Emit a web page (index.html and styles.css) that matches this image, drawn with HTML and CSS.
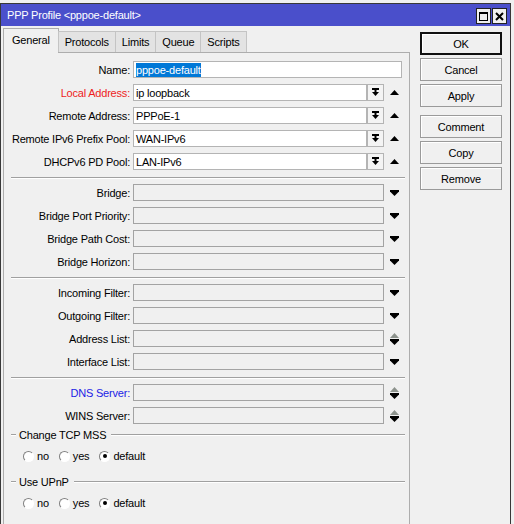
FILE: index.html
```html
<!DOCTYPE html>
<html lang="en">
<head>
    <meta charset="UTF-8">
    <title>PPP Profile</title>
    <link rel="stylesheet" href="styles.css">
</head>
<body>
    <div class="window">
        <div class="titlebar">
            <span class="title">PPP Profile &lt;pppoe-default&gt;</span>
            <div class="wnd-btns">
                <span class="wnd-btn">
                    <svg width="9" height="9" viewBox="0 0 9 9"><rect x="0.5" y="0.5" width="8" height="8" fill="none" stroke="#000"/><rect x="0" y="0" width="9" height="2" fill="#000"/></svg>
                </span>
                <span class="wnd-btn">
                    <svg width="9" height="9" viewBox="0 0 9 9"><path d="M1 1 L8 8 M8 1 L1 8" stroke="#000" stroke-width="2"/></svg>
                </span>
            </div>
        </div>
        <div class="content">
            <div class="main">
                <div class="tabs">
                    <div class="tab active">General</div>
                    <div class="tab">Protocols</div>
                    <div class="tab">Limits</div>
                    <div class="tab">Queue</div>
                    <div class="tab">Scripts</div>
                </div>
                <div class="panel">
                    <div class="section">
                        <div class="row">
                            <label>Name:</label>
                            <div class="field name"><span class="sel">pppoe-default</span></div>
                        </div>
                        <div class="row">
                            <label class="red">Local Address:</label>
                            <div class="field edit">ip loopback</div>
                            <span class="dd-btn"><svg width="9" height="9" viewBox="0 0 9 9"><rect x="1" y="0" width="7" height="2"/><rect x="3.5" y="2" width="2" height="2"/><polygon points="1,4 8,4 4.5,8"/></svg></span>
                            <span class="arrow"><svg width="9" height="5" viewBox="0 0 9 5"><polygon points="0,5 9,5 4.5,0"/></svg></span>
                        </div>
                        <div class="row">
                            <label>Remote Address:</label>
                            <div class="field edit">PPPoE-1</div>
                            <span class="dd-btn"><svg width="9" height="9" viewBox="0 0 9 9"><rect x="1" y="0" width="7" height="2"/><rect x="3.5" y="2" width="2" height="2"/><polygon points="1,4 8,4 4.5,8"/></svg></span>
                            <span class="arrow"><svg width="9" height="5" viewBox="0 0 9 5"><polygon points="0,5 9,5 4.5,0"/></svg></span>
                        </div>
                        <div class="row">
                            <label>Remote IPv6 Prefix Pool:</label>
                            <div class="field edit">WAN-IPv6</div>
                            <span class="dd-btn"><svg width="9" height="9" viewBox="0 0 9 9"><rect x="1" y="0" width="7" height="2"/><rect x="3.5" y="2" width="2" height="2"/><polygon points="1,4 8,4 4.5,8"/></svg></span>
                            <span class="arrow"><svg width="9" height="5" viewBox="0 0 9 5"><polygon points="0,5 9,5 4.5,0"/></svg></span>
                        </div>
                        <div class="row">
                            <label>DHCPv6 PD Pool:</label>
                            <div class="field edit">LAN-IPv6</div>
                            <span class="dd-btn"><svg width="9" height="9" viewBox="0 0 9 9"><rect x="1" y="0" width="7" height="2"/><rect x="3.5" y="2" width="2" height="2"/><polygon points="1,4 8,4 4.5,8"/></svg></span>
                            <span class="arrow"><svg width="9" height="5" viewBox="0 0 9 5"><polygon points="0,5 9,5 4.5,0"/></svg></span>
                        </div>
                    </div>
                    <div class="sep"></div>
                    <div class="section">
                        <div class="row">
                            <label>Bridge:</label>
                            <div class="field off"></div>
                            <span class="arrow"><svg width="9" height="6" viewBox="0 0 9 6"><polygon points="0,0 9,0 9,1.5 4.5,6 0,1.5"/></svg></span>
                        </div>
                        <div class="row">
                            <label>Bridge Port Priority:</label>
                            <div class="field off"></div>
                            <span class="arrow"><svg width="9" height="6" viewBox="0 0 9 6"><polygon points="0,0 9,0 9,1.5 4.5,6 0,1.5"/></svg></span>
                        </div>
                        <div class="row">
                            <label>Bridge Path Cost:</label>
                            <div class="field off"></div>
                            <span class="arrow"><svg width="9" height="6" viewBox="0 0 9 6"><polygon points="0,0 9,0 9,1.5 4.5,6 0,1.5"/></svg></span>
                        </div>
                        <div class="row">
                            <label>Bridge Horizon:</label>
                            <div class="field off"></div>
                            <span class="arrow"><svg width="9" height="6" viewBox="0 0 9 6"><polygon points="0,0 9,0 9,1.5 4.5,6 0,1.5"/></svg></span>
                        </div>
                    </div>
                    <div class="sep"></div>
                    <div class="section">
                        <div class="row">
                            <label>Incoming Filter:</label>
                            <div class="field off"></div>
                            <span class="arrow"><svg width="9" height="6" viewBox="0 0 9 6"><polygon points="0,0 9,0 9,1.5 4.5,6 0,1.5"/></svg></span>
                        </div>
                        <div class="row">
                            <label>Outgoing Filter:</label>
                            <div class="field off"></div>
                            <span class="arrow"><svg width="9" height="6" viewBox="0 0 9 6"><polygon points="0,0 9,0 9,1.5 4.5,6 0,1.5"/></svg></span>
                        </div>
                        <div class="row">
                            <label>Address List:</label>
                            <div class="field off"></div>
                            <span class="arrow"><svg width="9" height="12" viewBox="0 0 9 12"><polygon points="0,5 9,5 4.5,0" fill="#8d938d"/><polygon points="0,6 9,6 9,7.5 4.5,12 0,7.5"/></svg></span>
                        </div>
                        <div class="row">
                            <label>Interface List:</label>
                            <div class="field off"></div>
                            <span class="arrow"><svg width="9" height="6" viewBox="0 0 9 6"><polygon points="0,0 9,0 9,1.5 4.5,6 0,1.5"/></svg></span>
                        </div>
                    </div>
                    <div class="sep"></div>
                    <div class="section">
                        <div class="row">
                            <label class="blue">DNS Server:</label>
                            <div class="field off"></div>
                            <span class="arrow"><svg width="9" height="12" viewBox="0 0 9 12"><polygon points="0,5 9,5 4.5,0" fill="#8d938d"/><polygon points="0,6 9,6 9,7.5 4.5,12 0,7.5"/></svg></span>
                        </div>
                        <div class="row">
                            <label>WINS Server:</label>
                            <div class="field off"></div>
                            <span class="arrow"><svg width="9" height="12" viewBox="0 0 9 12"><polygon points="0,5 9,5 4.5,0" fill="#8d938d"/><polygon points="0,6 9,6 9,7.5 4.5,12 0,7.5"/></svg></span>
                        </div>
                    </div>
                    <div class="group">
                        <div class="group-title"><span class="line short"></span><span class="gt">Change TCP MSS</span><span class="line"></span></div>
                        <div class="radios">
                            <div class="radio"><i></i>no</div>
                            <div class="radio"><i></i>yes</div>
                            <div class="radio"><i class="on"></i>default</div>
                        </div>
                    </div>
                    <div class="group second">
                        <div class="group-title"><span class="line short"></span><span class="gt">Use UPnP</span><span class="line"></span></div>
                        <div class="radios">
                            <div class="radio"><i></i>no</div>
                            <div class="radio"><i></i>yes</div>
                            <div class="radio"><i class="on"></i>default</div>
                        </div>
                    </div>
                </div>
            </div>
            <div class="buttons">
                <div class="btn ok">OK</div>
                <div class="btn">Cancel</div>
                <div class="btn">Apply</div>
                <div class="btn spaced">Comment</div>
                <div class="btn">Copy</div>
                <div class="btn">Remove</div>
            </div>
        </div>
    </div>
</body>
</html>
```

FILE: styles.css
```css
* {
    box-sizing: border-box;
}
body {
    margin: 0;
    height: 524px;
    overflow: hidden;
    background-color: #f0f0f0;
    font-family: "Liberation Sans", Arial, sans-serif;
    font-size: 11px;
    letter-spacing: -0.2px;
    color: #000;
}
.window {
    width: 511px;
    height: 530px;
    margin-top: 3px;
    border: 1px solid #383838;
    background-color: #f0f0f0;
    display: flex;
    flex-direction: column;
}
.titlebar {
    height: 22px;
    background-color: #4a4fcb;
    color: #fff;
    display: flex;
    align-items: center;
    justify-content: space-between;
    padding: 0 3px 0 6px;
}
.wnd-btns {
    display: flex;
    gap: 1px;
    margin-top: 2px;
}
.wnd-btn {
    width: 15px;
    height: 16px;
    border: 1px solid #222;
    background-color: #f0f0f0;
    display: flex;
    align-items: center;
    justify-content: center;
}
.content {
    flex: 1;
    display: flex;
    padding: 2px 0 0 2px;
}
.main {
    width: 407px;
    display: flex;
    flex-direction: column;
}
.tabs {
    height: 24px;
    display: flex;
    align-items: flex-end;
    position: relative;
    z-index: 1;
}
.tab {
    height: 21px;
    padding: 0 6px;
    margin-left: -1px;
    border: 1px solid #c4c4c4;
    border-bottom: none;
    background-color: #e3e3e3;
    display: flex;
    align-items: center;
}
.tab.active {
    height: 25px;
    margin-left: 0;
    margin-bottom: -1px;
    padding: 0 8px 3px;
    border-color: #adadad;
    background-color: #f0f0f0;
}
.panel {
    flex: 1;
    border: 1px solid #adadad;
    border-bottom: none;
    padding-top: 8px;
}
.section {
    display: flex;
    flex-direction: column;
    gap: 6px;
}
.row {
    height: 17px;
    display: flex;
    align-items: center;
}
.row label {
    width: 126px;
    margin-right: 3px;
    text-align: right;
    white-space: nowrap;
}
.row label.red {
    color: #ee1c1c;
}
.row label.blue {
    color: #2222e6;
}
.field {
    height: 17px;
    padding-left: 2px;
    border: 1px solid #b4b4b4;
    background-color: #fff;
    display: flex;
    align-items: center;
    white-space: nowrap;
}
.field.name {
    width: 269px;
}
.field.edit {
    width: 234px;
}
.field.off {
    width: 251px;
    border-color: #a3a3a3;
    background-color: #f0f0f0;
}
.sel {
    background-color: #0078d7;
    color: #fff;
    line-height: 14px;
}
.dd-btn {
    width: 17px;
    height: 17px;
    border: 1px solid #b4b4b4;
    background-color: #f4f4f4;
    display: flex;
    align-items: center;
    justify-content: center;
}
.arrow {
    margin-left: 6px;
    display: flex;
}
.sep {
    height: 2px;
    margin: 7px 4px 5px 7px;
    border-top: 1px solid #a0a0a0;
    border-bottom: 1px solid #fff;
}
.group {
    margin-top: 4px;
}
.group.second {
    margin-top: 12px;
}
.group-title {
    height: 14px;
    margin: 0 4px 0 7px;
    display: flex;
    align-items: center;
}
.group-title .gt {
    padding: 0 5px 0 3px;
}
.line {
    flex: 1;
    height: 2px;
    border-top: 1px solid #a0a0a0;
    border-bottom: 1px solid #fff;
}
.line.short {
    flex: none;
    width: 5px;
}
.radios {
    height: 14px;
    margin-top: 7px;
    padding-left: 19px;
    display: flex;
    align-items: center;
    gap: 10px;
}
.radio {
    display: flex;
    align-items: center;
    gap: 3px;
}
.radio i {
    width: 11px;
    height: 11px;
    border-radius: 50%;
    border: 1px solid;
    border-color: #808080 #fff #fff #808080;
    background-color: #fff;
    display: flex;
    align-items: center;
    justify-content: center;
}
.radio i.on::after {
    content: "";
    width: 4px;
    height: 4px;
    border-radius: 50%;
    background-color: #000;
}
.buttons {
    width: 82px;
    margin-left: 10px;
    margin-top: 4px;
    display: flex;
    flex-direction: column;
    gap: 3px;
}
.btn {
    height: 23px;
    border: 1px solid #9a9a9a;
    background-color: #f0f0f0;
    box-shadow: inset 1px 1px 0 #fff;
    display: flex;
    align-items: center;
    justify-content: center;
}
.btn.ok {
    border: 2px solid #111;
}
.btn.spaced {
    margin-top: 5px;
}
```
